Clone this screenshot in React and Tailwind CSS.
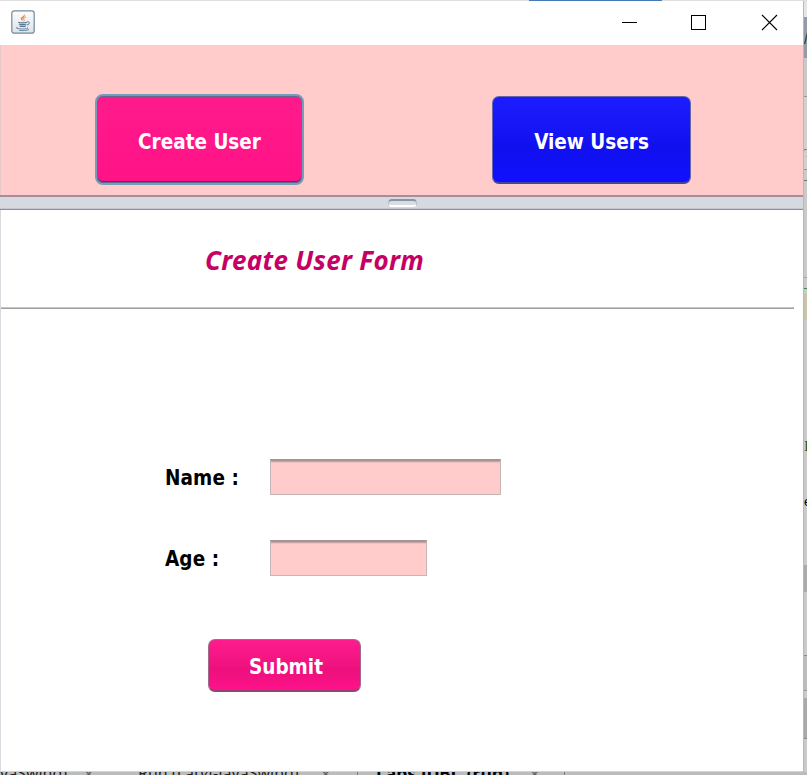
import React from "react";

const tahoma = "font-['DejaVu_Sans_Condensed','DejaVu_Sans',sans-serif] font-bold [font-stretch:condensed] text-[20.5px] leading-none";

function JavaIcon() {
  return (
    <svg width="24" height="24" viewBox="0 0 24 24" fill="none">
      <defs>
        <linearGradient id="tile" x1="0" y1="0" x2="0" y2="1">
          <stop offset="0" stopColor="#fdfdfd" />
          <stop offset="1" stopColor="#dbe2e9" />
        </linearGradient>
      </defs>
      <rect x="0.8" y="0.8" width="22.4" height="22.4" rx="2.5" fill="url(#tile)" stroke="#74899a" strokeWidth="1.2" />
      <path d="M13.4 3.8c.7 2.2-4.2 3.2-3.6 5.1.2.9 1.2 1.5 1.9 2.2-.1-1.4-.7-1.9.3-2.8 1.2-1.1 2.7-2.5 1.4-4.5Z" fill="#e48a43" />
      <path d="M14.8 7c-2.3.9-2.9 1.8-1.8 2.8.5.6.2 1-.3 1.5" stroke="#e48a43" strokeWidth="1" />
      <path d="M7.2 12.2c2 .8 6.4.7 8.6 0M7.9 14c2 .8 5.3.8 7.4 0M8.6 15.9c1.9.7 4.3.7 6.2 0" stroke="#507896" strokeWidth="1.2" />
      <path d="M16 12c3-.9 3.4 2.2-.2 3" stroke="#507896" strokeWidth="1" />
      <path d="M6.6 17.2c-3.5 1.2 1.2 1.8 5.2 1.7 4 0 6.5-.7 4.5-1.3M8 20.3c4 .5 8 .3 10-.8" stroke="#6d8ba3" strokeWidth="1" />
    </svg>
  );
}

function TitleBar() {
  return (
    <header className="flex h-[44px] shrink-0 bg-white">
      <div className="flex-1 pt-[9px] pl-[11px]"><JavaIcon /></div>
      <svg width="203" height="44" viewBox="600 1 203 44" fill="none" stroke="#000" shapeRendering="crispEdges">
        <path d="M622 22.5h15" />
        <rect x="691.5" y="15.5" width="14" height="14" />
        <path d="M762 15l15 15M777 15l-15 15" strokeWidth="1.1" shapeRendering="auto" />
      </svg>
    </header>
  );
}

function Splitter() {
  return (
    <div className="flex h-[15px] shrink-0 justify-center border-t-2 border-b border-t-[#a38f9c] border-b-[#8e8e9e] bg-[#d6d9df] shadow-[inset_0_-1px_0_#c5c5d3]">
      <div className="mt-[2px] ml-px h-[8px] w-[29px] rounded-[4px] border border-t-2 border-t-[#8c93a2] border-x-[#b9bec8] border-b-2 border-b-white bg-[#d9dce2]" />
    </div>
  );
}

function Field({ label, children }) {
  return (
    <div className="flex h-[37px] items-start">
      <label className={"w-[105px] pt-[9px] tracking-[0.1px] whitespace-pre text-black " + tahoma}>{label}</label>
      {children}
    </div>
  );
}

const inputStyle = "h-[36px] border border-t-2 border-[#c5b5b6] border-t-[#a69494] bg-[#ffcbcb] shadow-[inset_0_1px_0_#c5a5a5,inset_0_2px_0_#eec0c0] outline-none";

export default function App() {
  return (
    <div className="grid h-[775px] w-[807px] grid-cols-[803px_4px] grid-rows-[1px_771px_3px] overflow-hidden bg-[#cacaca]">
      <div className="col-span-2 flex bg-[#dedede]">
        <div className="ml-[529px] w-[133px] bg-[#4678b8]" />
      </div>

      <main className="flex flex-col border-b border-[#d4d4d4] bg-white">
        <TitleBar />
        <section className="flex h-[150px] shrink-0 border-l border-[#e5c9c9] bg-[#ffcbcb] pt-[49px] pl-[94px]">
          <button className={"h-[91px] w-[209px] rounded-[8px] border-[2px] border-[#739dbb] bg-[#ff1489] bg-linear-to-b from-[#ff1b8c] to-[#ff1286] pt-[5px] text-white shadow-[inset_0_0_0_1px_#67658b,inset_0_-2px_0_#493662] " + tahoma}>
            Create User
          </button>
          <button className={"mt-[2px] ml-[188px] h-[88px] w-[199px] rounded-[7px] border border-[#6567a8] border-b-2 border-b-[#44449b] bg-linear-to-b from-[#1c1cff] via-[#1010ef] via-60% to-[#1010ff] pt-[5px] text-white " + tahoma}>
            View Users
          </button>
        </section>
        <Splitter />
        <section className="flex flex-1 flex-col border-l border-[#d9d9df] bg-white">
          <h1 className="h-[97px] pt-[35px] pl-[204px] font-['Noto_Sans',sans-serif] text-[26px] leading-[30px] font-bold tracking-[0.3px] whitespace-nowrap text-[#c60064] italic">Create User Form</h1>
          <hr className="h-[2px] w-[793px] border-t border-b border-t-[#c6c7c9] border-b-[#a0a0a0]" />
          <form className="flex flex-col pt-[150px] pl-[164px]" onSubmit={(e) => e.preventDefault()}>
            <Field label="Name :"><input aria-label="Name" className={inputStyle + " w-[231px]"} /></Field>
            <div className="h-[44px]" />
            <Field label="Age :"><input aria-label="Age" className={inputStyle + " w-[157px]"} /></Field>
            <button className={"mt-[62px] ml-[43px] h-[53px] w-[153px] rounded-[7px] border border-[#a16b8d] border-b-2 border-b-[#90466e] bg-linear-to-b from-[#ff1c8e] via-[#ed107c] via-60% to-[#ff128b] pt-[4px] pl-[3px] text-white " + tahoma}>
              Submit
            </button>
          </form>
        </section>
      </main>

      <aside className="flex flex-col overflow-hidden border-l border-[#b8b8b8] bg-[#cacaca]">
        <div className="h-[16px] shrink-0 bg-[#e5e5e5]" />
        <div className="h-[41px] shrink-0 bg-[#939ba7] pt-[15px] font-['Liberation_Sans',sans-serif] text-[14px] leading-none text-[#17363c]">/</div>
        <div className="h-[39px] shrink-0 border-b border-[#999] bg-[#c9c9c9]" />
        <div className="h-[73px] shrink-0 border-b border-[#9a9b70] bg-[#d0d0d0] pt-[49px] font-['Liberation_Serif',serif] text-[13px] leading-none text-[#536b9c]">T</div>
        <div className="h-[11px] shrink-0 border-b border-[#528255]" />
        <div className="h-[97px] shrink-0 border-b border-[#a6aa74]" />
        <div className="h-[11px] shrink-0 border-b border-[#3c8a48]" />
        <div className="mt-[5px] h-[26px] shrink-0 bg-[#c8c5ad]" />
        <div className="mt-[119px] h-[56px] shrink-0 font-['Liberation_Serif',serif] text-[15px] leading-none text-[#285c25]">I</div>
        <div className="h-[70px] shrink-0 font-['Liberation_Sans',sans-serif] text-[13px] leading-none text-black">e</div>
        <div className="h-[27px] shrink-0 bg-[#aaa]" />
        <div className="h-[64px] shrink-0 border-b border-[#8b8b8b]" />
        <div className="h-[35px] shrink-0 border-b border-[#999] bg-[#bdbdbd]" />
        <div className="mt-[7px] h-[41px] shrink-0 border-b border-[#888] bg-[#a9a9a9]" />
      </aside>

      <footer className="col-span-2 flex h-[3px] overflow-hidden bg-[#bcbcbc] font-['Noto_Sans',sans-serif] text-[16px] leading-[3px] whitespace-pre text-[#222]">
        <span className="w-[83px]">vaSwing)</span>
        <span className="w-[55px] text-[20px] text-[#666]">×</span>
        <span className="w-[182px]">Run (Lab4-JavaSwing)</span>
        <span className="w-[37px] text-[20px] text-[#666]">×</span>
        <span className="w-[19px] border-l border-[#777]" />
        <span className="w-[153px] text-[17.5px] font-bold text-black">Labs JDBC (run)</span>
        <span className="w-[35px] text-[20px] text-[#666]">×</span>
        <span className="border-l border-[#777]" />
      </footer>
    </div>
  );
}
